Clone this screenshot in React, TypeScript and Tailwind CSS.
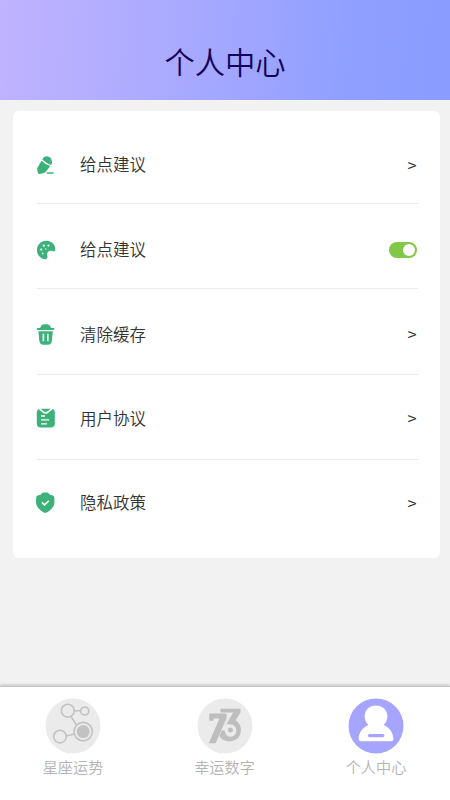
import React from "react";

const green = "#3cb179";

const PencilIcon = () => (
  <svg width="20" height="20" viewBox="0 0 20 20" fill={green}>
    <path d="M6.3 4.6L7.2 2.9Q8.4 1 10.4 1.2L12.6 1.7Q14.6 2.3 15.2 4L15.9 6Q16.4 7.6 15.6 9L15.1 9.9Q10.6 8.8 6.3 4.6Z" />
    <path d="M5.5 5.8Q9.6 9.9 14.3 11.1L10 16.4Q8.8 17.8 7.2 18.2L3.6 19Q2 19.2 1.7 17.6L1.2 14.6Q1 13.4 1.6 12.4Z" />
    <rect x="10.6" y="17.2" width="7.2" height="1.6" rx=".7" />
  </svg>
);

const PaletteIcon = () => (
  <svg width="20" height="20" viewBox="0 0 20 20">
    <path
      fill={green}
      d="M10.2 .8C15.6 .8 19.3 4.6 19.3 9.3C19.3 11.2 18.2 11.6 16.6 11.1C13.2 10 10.4 12 11.3 15.2C11.8 17.2 11.3 19.3 9.2 19.2C4.2 18.8 1 14.8 1 10C1 4.8 5 .8 10.2 .8Z"
    />
    <g fill="#fff">
      <circle cx="5.2" cy="9.6" r="1.1" />
      <circle cx="7.8" cy="5.7" r="1.1" />
      <circle cx="12.4" cy="5.6" r="1.1" />
      <circle cx="6.6" cy="13.4" r=".9" />
      <circle cx="9.8" cy="9" r=".7" />
    </g>
  </svg>
);

const TrashIcon = () => (
  <svg width="20" height="21" viewBox="0 0 20 21" fill={green}>
    <path d="M4.2 4Q5 .2 8.4 .2H10.8Q14.2 .2 15 4H17.6Q18.4 4.1 18.4 5Q18.4 5.9 17.6 6H1.5Q.7 5.9.7 5Q.7 4.1 1.5 4Z" />
    <path d="M2.4 7.2H16.8L15.9 16.4Q15.2 20.8 12 20.8H7.2Q4 20.8 3.3 16.4Z" />
    <path d="M7.4 9.7V17.2M11.8 9.7V17.2" stroke="#fff" strokeWidth="1.6" />
  </svg>
);

const ClipboardIcon = () => (
  <svg width="20" height="20" viewBox="0 0 20 20">
    <rect x=".8" y=".8" width="18" height="18.8" rx="4" fill={green} />
    <path
      d="M3.4 .6Q5 2.2 6.8 3.6Q9.6 6.2 12.4 3.6Q14.4 2.2 16 .6"
      fill="none"
      stroke="#fff"
      strokeWidth="1.6"
    />
    <path d="M5 8H9M5 11.8H13M5 15.8H11" stroke="#fff" strokeWidth="1.3" />
  </svg>
);

const ShieldIcon = () => (
  <svg width="20" height="21" viewBox="0 0 20 21">
    <path
      fill={green}
      d="M6 1.2Q6.4 .4 7.4 .4H11.2Q12.2 .4 12.6 1.2Q13.2 3 16.8 3.4Q18.2 3.6 18.2 5L18.5 10C18.5 14.8 14.8 18.2 10.8 20.4Q9.3 21 7.8 20.4C3.8 18.2 0 14.8 0 10L.3 5Q.4 3.6 1.8 3.4Q5.4 3 6 1.2Z"
    />
    <path d="M5.9 10.4L8.5 12.9L12.8 8.8" fill="none" stroke="#fff" strokeWidth="1.5" />
  </svg>
);

const ConstellationIcon = () => (
  <svg width="56" height="56" viewBox="0 0 56 56" fill="none" stroke="#c2c2c2" strokeWidth="1.6">
    <circle cx="28" cy="28" r="27.5" fill="#ebebeb" stroke="none" />
    <path d="M29.2 12.7H35.3M26.2 18.8L31.4 27M21.2 38L29.5 36" />
    <circle cx="22.8" cy="12.7" r="6.4" />
    <circle cx="39.7" cy="13" r="4" />
    <circle cx="15" cy="38.6" r="6.3" />
    <circle cx="38.2" cy="33.6" r="9.2" />
    <circle cx="38.2" cy="33.6" r="6.5" fill="#c2c2c2" stroke="none" />
  </svg>
);

const NumberIcon = () => (
  <svg width="56" height="56" viewBox="0 0 56 56">
    <circle cx="28" cy="28" r="27.5" fill="#ebebeb" />
    <g fill="#bebebe">
      <path d="M12.3 15.4H29.6V20.2L18.6 45.2H11.8L22.4 20.6H16.4V22.8H12.3Z" />
      <path d="M23.4 10.8H43.5V14.6L38.6 22.2Q44 25.6 44 32Q43.4 42.6 33 43.4Q25.4 43.2 22.4 38L24.8 32.4H27.6Q28.6 38.6 33.4 38.8Q39 38.2 39.4 32.4Q39 26.8 32.8 26.2H29.4L36.2 14.6H23.4Z" />
      <circle cx="33.4" cy="32" r="2.5" />
    </g>
  </svg>
);

const UserIcon = () => (
  <svg width="56" height="56" viewBox="0 0 56 56">
    <circle cx="28" cy="28" r="27.5" fill="#a5a5ff" />
    <path
      fill="#fff"
      d="M28 7.4C34.6 7.4 39.4 12 39.4 18.4C39.4 22 37.8 24.8 35.6 27C41.4 29.4 45 34.4 45.4 40.6Q45.4 43.2 43 43.2H13Q10.6 43.2 10.6 40.6C11 34.4 14.6 29.4 20.4 27C18.2 24.8 16.6 22 16.6 18.4C16.6 12 21.4 7.4 28 7.4Z"
    />
    <rect x="20" y="36" width="16.4" height="3.2" rx="1.6" fill="#a5a5ff" />
  </svg>
);

const menuData = [
  {id: 1, label: "给点建议", icon: <PencilIcon />, className: "pt-[9px] border-b"},
  {id: 2, label: "给点建议", icon: <PaletteIcon />, className: "pt-[8px] border-b", toggle: true},
  {id: 3, label: "清除缓存", icon: <TrashIcon />, className: "pt-[6px] border-b"},
  {id: 4, label: "用户协议", icon: <ClipboardIcon />, className: "pt-[3px] border-b"},
  {id: 5, label: "隐私政策", icon: <ShieldIcon />, className: ""},
];

const tabData = [
  {id: 1, label: "星座运势", icon: <ConstellationIcon />},
  {id: 2, label: "幸运数字", icon: <NumberIcon />},
  {id: 3, label: "个人中心", icon: <UserIcon />},
];

const Toggle = () => (
  <span className="flex h-4 w-7 items-center justify-end rounded-full bg-[#82c746] pr-[1.5px]">
    <span className="size-3 rounded-full bg-white" />
  </span>
);

const App = () => {
  return (
    <div className="flex h-[800px] w-[450px] flex-col overflow-hidden bg-[#f2f2f2] font-['Noto_Sans_CJK_SC',sans-serif] font-[350]">
      {/* header */}
      <header className="flex h-[100px] shrink-0 items-end justify-center bg-[linear-gradient(93deg,#c0b3ff_0%,#a5a8ff_46%,#8f9fff_78%,#899cff_100%)] pb-[17px]">
        <h1 className="text-[30.3px] leading-11 text-[#150059]">个人中心</h1>
      </header>

      {/* menu card */}
      <main className="flex-1 pt-[10.5px] pr-[10.5px] pl-[12.5px]">
        <ul className="h-[447.5px] rounded-md bg-white pt-[7.5px] pr-[21.5px] pl-6">
          {menuData.map((item) => (
            <li
              key={item.id}
              className={`flex h-[85.5px] items-center border-[#ebebeb] ${item.className}`}
            >
              <span className="-ml-px w-[44.5px] shrink-0">{item.icon}</span>
              <span className="flex-1 pb-px text-[16.5px] leading-6 text-[#333]">{item.label}</span>
              {item.toggle ? (
                <span className="pr-[1.5px]">
                  <Toggle />
                </span>
              ) : (
                <span className="pr-[1.5px] text-[16.5px] leading-6 text-[#333]">&gt;</span>
              )}
            </li>
          ))}
        </ul>
      </main>

      {/* bottom tabs */}
      <nav className="flex h-[114px] shrink-0 justify-between border-t border-[#c4c4c4] bg-white pt-[10.5px] pr-[43.5px] pl-[42.5px] shadow-[0_-1px_3px_rgba(0,0,0,0.22)]">
        {tabData.map((tab) => (
          <div key={tab.id} className="flex w-[61px] flex-col items-center">
            {tab.icon}
            <span className="text-[15.2px] leading-6 whitespace-nowrap text-[#b4b4b4]">
              {tab.label}
            </span>
          </div>
        ))}
      </nav>
    </div>
  );
};

export default App;
